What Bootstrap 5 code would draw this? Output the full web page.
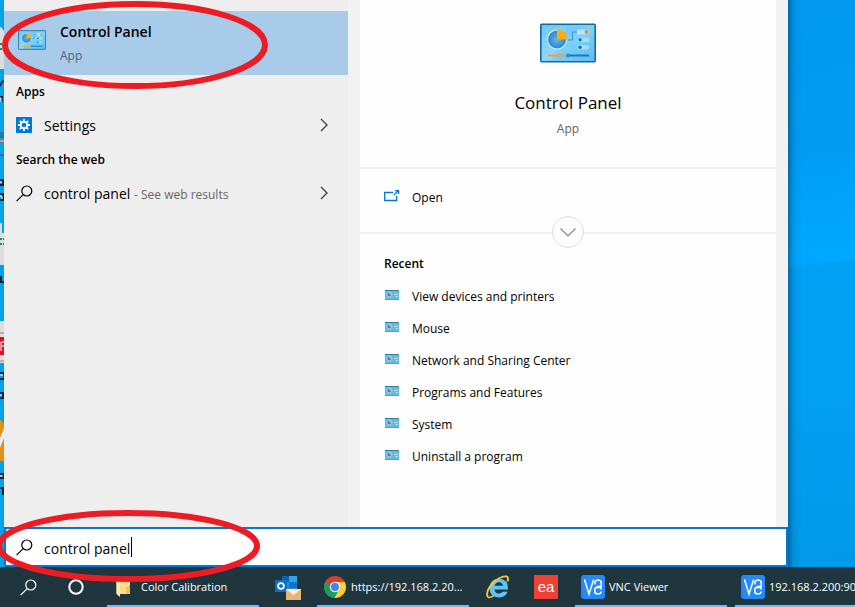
<!DOCTYPE html>
<html lang="en">
<head>
<meta charset="utf-8">
<meta name="viewport" content="width=device-width, initial-scale=1">
<title>Search - Control Panel</title>
<link href="https://cdn.jsdelivr.net/npm/bootstrap@5.3.0/dist/css/bootstrap.min.css" rel="stylesheet">
<style>
  body { font-family: "Open Sans", "Noto Sans", sans-serif; font-size: 14px; line-height: 20px; color: #000; background: #00a2f2; }
  svg { display: block; flex-shrink: 0; }
  button, a { color: inherit; text-decoration: none; }
  .plain-btn { border: 0; background: transparent; color: inherit; text-align: left; }
  .desk-left { width: 4px; background: #00a2e8; }
  .desk-right { flex: 0 0 8%; max-width: 67px;
    background: linear-gradient(to right, rgba(0,50,90,.5), rgba(0,60,100,.12) 5px, transparent 14px),
      linear-gradient(174deg, #0099f0 0, #009cf4 25%, #00a8ff 45%, #00a8ff 46%, #00a0f4 47%, #00a0f2 70%, #0099e9 100%); }
  .results { display: grid; grid-template-columns: 344fr 12px 416fr 12px; background: #f2f2f2; }
  .list-pane { background: #eee; padding-top: 11px; }
  .detail-pane { grid-column: 3; background: #fefefe; }
  .best { height: 64px; background: #a8cbea; padding: 2px 12px 0 14px; gap: 14px; }
  .best-name { font-weight: 600; }
  .best-icon { margin-bottom: 8px; }
  .sub { font-size: 12px; color: #666; }
  .best .sub { color: #4f6373; }
  .head { font-size: 12px; line-height: 20px; font-weight: 600; height: 32px; padding: 2px 12px 0; }
  .hit { height: 36px; padding: 0 16px 0 12px; }
  .lbl { padding-top: 2px; }
  .icon-col { width: 28px; }
  .hero { height: 169px; border-bottom: 2px solid #f0f0f0; padding-top: 23px; }
  .hero-name { font-size: 17px; line-height: 24px; margin-top: 28px; }
  .open-row { height: 65px; border-bottom: 2px solid #f0f0f0; padding: 0 24px; font-size: 12px; }
  .open-row .plain-btn { height: 58px; }
  .expander { position: absolute; left: 50%; top: 100%; transform: translate(-50%, -50%); width: 32px; height: 32px; }
  .open-row .expander { height: 32px; border: 1px solid #ddd; background: #fefefe; border-radius: 50%; }
  .recent-title { padding: 20px 24px 7px; font-size: 12px; line-height: 20px; font-weight: 600; }
  .recent { height: 32px; padding: 0 24px; font-size: 12px; }
  .action-icon { width: 28px; padding-bottom: 4px; }
  .search-box { height: 40px; border: 2px solid #0078d7; background: #fff; padding-left: 10px; }
  .search-field { height: 20px; }
  .search-box input { border: 0; outline: 0; background: transparent; font-size: 14px; }
  .caret { position: absolute; left: 87px; top: 0; width: 1px; height: 20px; background: #000; }
  .taskbar { height: 40px; background: #20363f; color: #fff; font-size: 11px; }
  .system-tasks { margin-right: 7px; }
  .task-icon { width: 48px; }
  .task { width: 152px; padding: 2px 6px 0; gap: 4px; border-bottom: 2px solid #76b9ed; }
  .gap-task { gap: 5px; }
  .mark-top, .mark-bottom { position: absolute; left: 0; pointer-events: none; z-index: 5; }
  .mark-top { top: 0; }
  .mark-bottom { bottom: 22px; }
</style>
<script src="https://cdn.jsdelivr.net/npm/bootstrap@5.3.0/dist/js/bootstrap.bundle.min.js"></script>
</head>
<body>
<svg width="0" height="0" class="position-absolute" aria-hidden="true">
  <defs>
    <linearGradient id="panelFill" x1="0" y1="0" x2="1" y2="1"><stop offset="0" stop-color="#59bdf0"/><stop offset=".5" stop-color="#7dd0fb"/><stop offset="1" stop-color="#5cbdf5"/></linearGradient>
    <radialGradient id="pieFill"><stop offset="0" stop-color="#69b4e0"/><stop offset="1" stop-color="#2486c8"/></radialGradient>
    <symbol id="panel" viewBox="0 0 56 39">
      <rect x=".8" y=".8" width="54.4" height="37.4" rx="1" fill="url(#panelFill)" stroke="#14699f" stroke-width="1.6"/>
      <path d="M2 2h26L11 37H2z" fill="#fff" opacity=".14"/>
      <circle cx="17" cy="16" r="9.6" fill="url(#pieFill)" stroke="#cdeafb" stroke-width="1.2"/>
      <path d="M17 16V5.500a10.500 10.500 0 0 1 10.500 10.500z" fill="#fdab17"/>
      <path d="M28 16.500h4.500V8.500H37" fill="none" stroke="#3698d4"/>
      <rect x="37" y="6" width="12" height="5" rx="1.500" fill="#b5e4fd"/><rect x="37" y="14" width="12" height="4.500" rx="1.500" fill="#a5dcfa"/><rect x="37" y="21.500" width="12" height="4.500" rx="1.500" fill="#a5dcfa"/>
      <circle cx="46.500" cy="8.500" r="1.900" fill="#f58413"/><circle cx="40" cy="16.200" r="1.700" fill="#1475b5"/><circle cx="40" cy="23.800" r="1.700" fill="#1475b5"/>
      <path d="M8 32h19" stroke="#f4a12a" stroke-width="2"/><path d="M29 32h20" stroke="#1877bf" stroke-width="2"/><circle cx="28" cy="32" r="2" fill="#1b8fdc"/>
    </symbol>
    <symbol id="panelSmall" viewBox="0 0 14 10">
      <rect width="14" height="10" fill="#57bff5"/><path d="M0 .5h14" stroke="#2580b3"/><path d="M0 9.500h14" stroke="#3a9ed8"/>
      <circle cx="4.200" cy="4.500" r="2.400" fill="#3586c0" stroke="#b7e2fa" stroke-width=".8"/><path d="M4.200 4.500V2h2.500v2.500z" fill="#fbb32e"/>
      <path d="M9 4.500h1.500M11 4.500h1.500M11 6.500h1.500" stroke="#c9edff"/><rect x="11" y="2" width="1.500" height="1.300" fill="#e99545"/>
      <path d="M3 8h4" stroke="#d8b45c" stroke-width=".8"/>
    </symbol>
    <symbol id="lens" viewBox="0 0 17 17"><circle cx="10.800" cy="6" r="5" fill="none" stroke="currentColor" stroke-width="1.200"/><path d="M7.200 9.600.6 16.200" stroke="currentColor" stroke-width="1.200"/></symbol>
    <symbol id="next" viewBox="0 0 8 14"><path d="m1 1 6 6-6 6" fill="none" stroke="#444" stroke-width="1.400"/></symbol>
    <symbol id="vnc" viewBox="0 0 24 24"><rect width="24" height="24" rx="3" fill="#2489f4"/><path d="m3.500 4.500 4.500 14.500 4.700-14.500M14 9.500V8q0-3 3.100-3t3.100 3v3.500h-4.700M20.200 14.500q0-2-2-2h-2.200q-2.200 0-2.200 2.500v1.500q0 2.500 3.200 2.500 3 0 3.200-2.500" fill="none" stroke="#fff" stroke-width="1.500"/></symbol>
  </defs>
</svg>

<div class="d-flex flex-column min-vh-100 position-relative overflow-hidden">
  <div class="d-flex flex-grow-1">
    <div class="desk-left overflow-hidden" aria-hidden="true">
      <svg width="4" height="527" viewBox="0 0 4 527">
        <path d="M0 27h1l3 4v38H0zM0 223h2v10h2v32H0z" fill="#ddd"/><path d="M0 44h3M0 49h3M0 239h4M0 244h4" stroke="#14905b" stroke-width="2" stroke-dasharray="2 1"/>
        <path d="M0 86l2-4 2-1M0 97h2v5M0 180h3v5H0M0 194h3v6H0M0 277h1v5h3M0 373h4v6H0M0 393h3v5H0M0 474h3v4H0M0 488h3v7" fill="none" stroke="#10263b" stroke-width="2"/>
        <path d="M0 98h1v4M0 182h2M0 196h2v3M0 375h3M0 395h2M0 476h3" fill="none" stroke="#fff"/>
        <path d="M0 132h4v6H0M0 154h4v2H0" fill="#2478ad"/><path d="M0 139h4v5H0z" fill="#737b81"/><path d="M0 141h4" stroke="#ddd"/>
        <path d="M0 321h4v42H0z" fill="#ddd"/><path d="M0 333h4M0 361h4" stroke="#888"/><path d="M0 337h4v18H0z" fill="#d81329"/><path d="M1 351v-9h3M1 346h3" fill="none" stroke="#fff"/>
        <path d="M0 420q4 1 4 8v33H0z" fill="#e39113"/><path d="M0 438l4-10v10l-4 10z" fill="#eee"/>
      </svg>
    </div>
    <main class="d-flex flex-column flex-grow-1">
      <div class="results flex-grow-1">
        <section class="list-pane" aria-label="Results">
          <button class="best plain-btn d-flex align-items-center w-100">
            <svg width="28" height="20" class="best-icon"><use href="#panel" width="28" height="20"/></svg>
            <span class="d-flex flex-column gap-1"><span class="best-name">Control Panel</span><span class="sub">App</span></span>
          </button>
          <h2 class="head m-0 d-flex align-items-center">Apps</h2>
          <button class="hit plain-btn d-flex align-items-center w-100">
            <span class="icon-col"><svg width="16" height="16" viewBox="0 0 16 16"><rect width="16" height="16" fill="#0078d7"/><g stroke="#fff" stroke-width="1.900"><path d="M8 2v2.500M8 11.500V14M2 8h2.500M11.500 8H14M3.800 3.800l1.700 1.700M10.500 10.500l1.700 1.700M3.800 12.200l1.700-1.700M10.500 5.500l1.700-1.700"/></g><circle cx="8" cy="8" r="3.200" fill="#0078d7" stroke="#fff" stroke-width="1.700"/></svg></span>
            <span class="lbl flex-grow-1">Settings</span>
            <svg width="16" height="14"><use href="#next" width="8" height="14" x="4"/></svg>
          </button>
          <h2 class="head m-0 d-flex align-items-center">Search the web</h2>
          <button class="hit plain-btn d-flex align-items-center w-100">
            <span class="icon-col"><svg width="17" height="17"><use href="#lens"/></svg></span>
            <span class="lbl flex-grow-1">control panel <span class="sub">- See web results</span></span>
            <svg width="16" height="14"><use href="#next" width="8" height="14" x="4"/></svg>
          </button>
        </section>
        <section class="detail-pane" aria-label="Details">
          <div class="hero d-flex flex-column align-items-center">
            <svg width="56" height="40"><use href="#panel" width="56" height="40"/></svg>
            <div class="hero-name">Control Panel</div>
            <div class="sub mt-1">App</div>
          </div>
          <div class="open-row position-relative">
            <button class="plain-btn d-flex align-items-center p-0 w-100">
              <span class="action-icon"><svg width="16" height="12" viewBox="0 0 16 12"><path d="M9 2.500H.7v8h12V6" fill="none" stroke="#0078d7" stroke-width="1.300"/><path d="m10 5 4.500-4.500M11 .6h3.600V4" fill="none" stroke="#0078d7" stroke-width="1.200"/></svg></span>Open</button>
            <button class="expander plain-btn p-0 d-flex align-items-center justify-content-center" aria-label="Expand"><svg width="16" height="9" viewBox="0 0 16 9"><path d="m.5.5 7.500 7.500L15.500.5" fill="none" stroke="#888" stroke-width="1.200"/></svg></button>
          </div>
          <h2 class="recent-title m-0">Recent</h2>
          <a href="#" class="recent d-flex align-items-center"><span class="action-icon"><svg width="16" height="10"><use href="#panelSmall" width="14" height="10" x="1"/></svg></span>View devices and printers</a>
          <a href="#" class="recent d-flex align-items-center"><span class="action-icon"><svg width="16" height="10"><use href="#panelSmall" width="14" height="10" x="1"/></svg></span>Mouse</a>
          <a href="#" class="recent d-flex align-items-center"><span class="action-icon"><svg width="16" height="10"><use href="#panelSmall" width="14" height="10" x="1"/></svg></span>Network and Sharing Center</a>
          <a href="#" class="recent d-flex align-items-center"><span class="action-icon"><svg width="16" height="10"><use href="#panelSmall" width="14" height="10" x="1"/></svg></span>Programs and Features</a>
          <a href="#" class="recent d-flex align-items-center"><span class="action-icon"><svg width="16" height="10"><use href="#panelSmall" width="14" height="10" x="1"/></svg></span>System</a>
          <a href="#" class="recent d-flex align-items-center"><span class="action-icon"><svg width="16" height="10"><use href="#panelSmall" width="14" height="10" x="1"/></svg></span>Uninstall a program</a>
        </section>
      </div>
      <div class="search-box d-flex align-items-center">
        <label for="query" class="icon-col" aria-label="Search"><svg width="17" height="17"><use href="#lens"/></svg></label>
        <div class="search-field position-relative flex-grow-1 d-flex"><input id="query" type="text" value="control panel" class="w-100 p-0 pt-1" autocomplete="off"><span class="caret"></span></div>
      </div>
    </main>
    <div class="desk-right"></div>
  </div>

  <nav class="taskbar d-flex ps-1 overflow-hidden" aria-label="Taskbar">
    <div class="system-tasks d-flex flex-shrink-0">
      <button class="task-icon plain-btn p-0 d-flex align-items-center justify-content-center" aria-label="Search"><svg width="17" height="17"><use href="#lens"/></svg></button>
      <button class="task-icon plain-btn p-0 d-flex align-items-center justify-content-center" aria-label="Cortana"><svg width="16" height="16" viewBox="0 0 16 16"><circle cx="8" cy="8" r="6.700" fill="none" stroke="#fff" stroke-width="2"/></svg></button>
    </div>
    <div class="d-flex gap-task flex-shrink-0 text-nowrap">
      <button class="task plain-btn d-flex align-items-center">
        <svg width="24" height="24" viewBox="0 0 24 24"><path d="M3.500 2H11v16H3.500z" fill="#e9be55"/><path d="M8 2h9v9.500H8z" fill="#fbe08f"/><path d="M7 2.500h9V19H7z" fill="#fbdc86"/><path d="M13 12h4v7h-4z" fill="#edc55f"/><path d="M3.500 2 7 4.500V22l-3.500-3z" fill="#ffeaad"/></svg>Color Calibration</button>
      <button class="task-icon plain-btn p-0 d-flex align-items-center justify-content-center" aria-label="Outlook"><svg width="26" height="26" viewBox="0 0 26 26"><path d="M7 2h15v14H7z" fill="#1b90df"/><path d="M7 2h7v6H7z" fill="#0862b0"/><path d="M14 2h8v6h-8z" fill="#28a8ea"/><path d="M14 8h8v6h-8z" fill="#1373c8"/><path d="M0 6h12v12H0z" fill="#0a6fc9"/><circle cx="6" cy="12" r="2.900" fill="none" stroke="#fff" stroke-width="1.700"/><path d="M11 15h15v11H11z" fill="#e8b577"/><path d="m11 15 7.500 6 7.500-6z" fill="#fff1dd"/></svg></button>
      <button class="task plain-btn d-flex align-items-center">
        <svg width="24" height="24" viewBox="0 0 24 24"><circle cx="12" cy="12" r="11" fill="#e33b2e"/><path d="M12 12 2.500 6.500A11 11 0 0 0 12 23l5-8.500z" fill="#17a05a"/><path d="M12 7h9.800A11 11 0 0 1 11.500 23l5-9z" fill="#fdd030"/><circle cx="12" cy="12" r="5.200" fill="#fff"/><circle cx="12" cy="12" r="4.200" fill="#4285ed"/></svg>https://192.168.2.20...</button>
      <div class="d-flex">
        <button class="task-icon plain-btn p-0 d-flex align-items-center justify-content-center" aria-label="Internet Explorer"><svg width="24" height="24" viewBox="0 0 24 24"><path d="M22 14.500H8.500q.5 4 4.500 4 2.500 0 3.600-1.700h5Q19.500 22.500 13 22.500 3.500 22.300 3.500 13q.3-9 9.500-9.500 9.300.5 9 11zM17 10.700q-.5-3.500-4-3.500t-4.300 3.500z" fill="#5cc6f4"/><path d="M1.800 22Q-1 17 7 8q8-7.500 13.500-6.500 2.500.7 1 5" fill="none" stroke="#f5c737" stroke-width="1.900"/><path d="M1.800 22q2 1.300 6-1.300" fill="none" stroke="#f5c737" stroke-width="1.600"/></svg></button>
        <button class="task-icon plain-btn p-0 d-flex align-items-center justify-content-center" aria-label="ea"><svg width="24" height="24" viewBox="0 0 24 24"><rect width="24" height="24" fill="#ef4036"/><text x="12" y="17" text-anchor="middle" font-family="Liberation Sans, sans-serif" font-size="15" fill="#fff">ea</text></svg></button>
      </div>
      <div class="d-flex gap-2">
        <button class="task plain-btn d-flex align-items-center"><svg width="24" height="24"><use href="#vnc"/></svg>VNC Viewer</button>
        <button class="task plain-btn d-flex align-items-center"><svg width="24" height="24"><use href="#vnc"/></svg>192.168.2.200:900</button>
      </div>
    </div>
  </nav>
  <svg class="mark-top" width="272" height="92" aria-hidden="true"><ellipse cx="135" cy="45" rx="130" ry="41" fill="none" stroke="#ed1c24" stroke-width="6"/></svg>
  <svg class="mark-bottom" width="264" height="78" aria-hidden="true"><ellipse cx="128" cy="39" rx="129" ry="33" fill="none" stroke="#ed1c24" stroke-width="6"/></svg>
</div>
</body>
</html>
